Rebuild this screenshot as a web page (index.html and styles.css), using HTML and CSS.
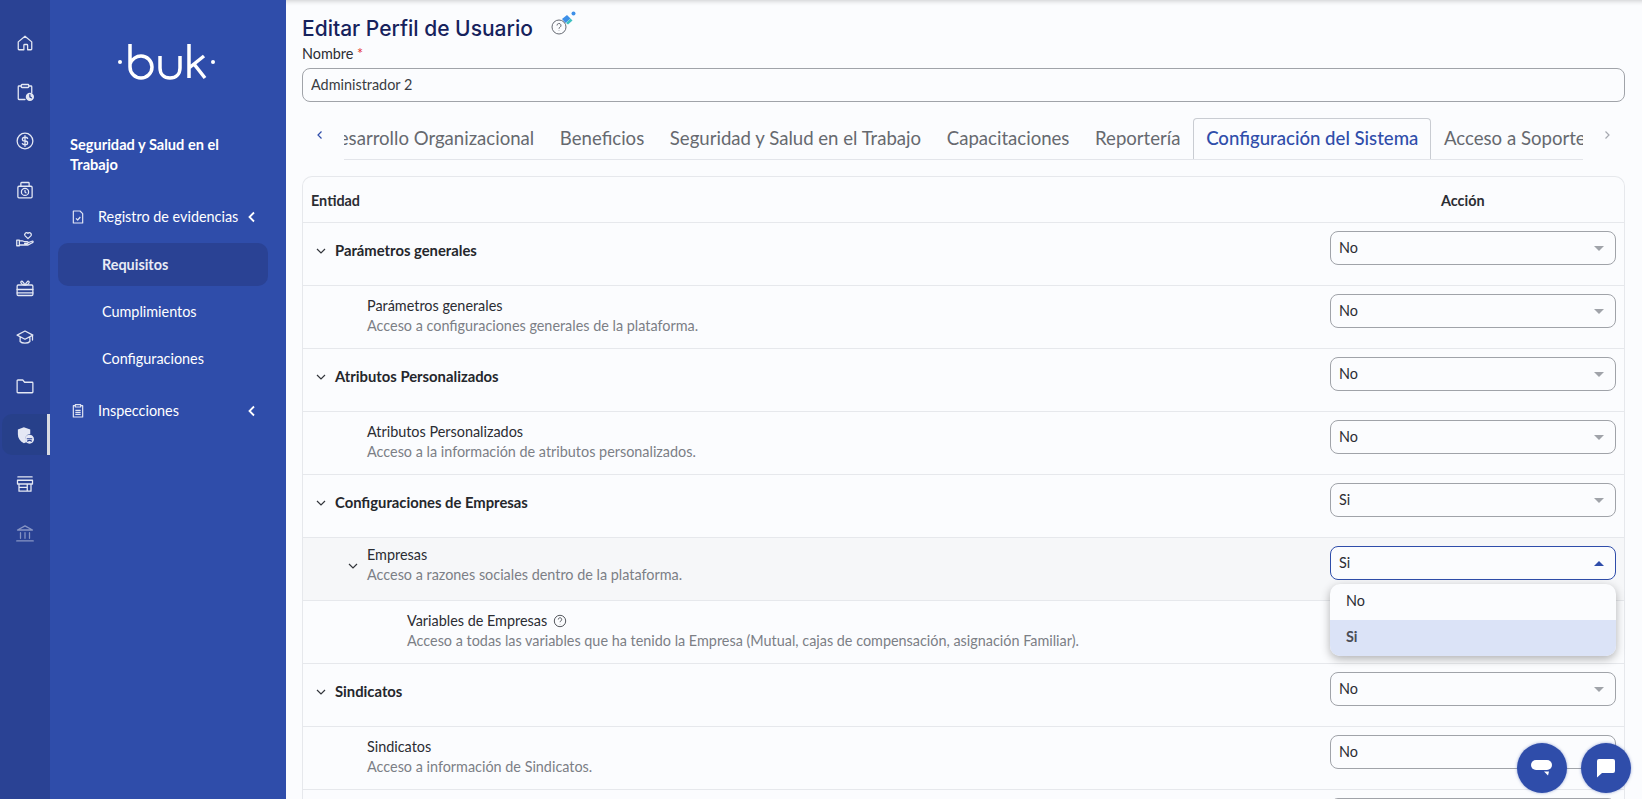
FILE: index.html
```html
<!DOCTYPE html>
<html lang="es">
  <head>
    <meta charset="UTF-8" />
    <meta name="viewport" content="width=device-width, initial-scale=1.0" />
    <title>Editar Perfil de Usuario</title>
    <link rel="stylesheet" href="styles.css">
  </head>
  <body>
    <div class="app">
      <aside class="rail">
        <a class="rail-item"><svg viewBox="0 0 24 24"><path d="M3 10.500l9-7.500 9 7.500v9.500a1 1 0 0 1-1 1h-4.500v-6a1 1 0 0 0-1-1h-3a1 1 0 0 0-1 1v6H4a1 1 0 0 1-1-1z"/></svg></a>
        <a class="rail-item"><svg viewBox="0 0 24 24"><path d="M12 22H4a1 1 0 0 1-1-1V5a1 1 0 0 1 1-1h3M17 4h3a1 1 0 0 1 1 1v8"/><rect x="7" y="2" width="10" height="4" rx="1"/><circle class="solid" cx="18.500" cy="18.500" r="5.500"/><path class="cut" d="M18.500 15.500v3l2 1.300"/></svg></a>
        <a class="rail-item"><svg viewBox="0 0 24 24"><circle cx="12" cy="12" r="10.500"/><path d="M15.500 8.500C15 7.500 14 7 12 7c-2.200 0-3.500 1-3.500 2.500S10 12 12 12s3.500 1 3.500 2.500S14.200 17 12 17c-2 0-3-.5-3.500-1.500M12 5v14"/></svg></a>
        <a class="rail-item"><svg viewBox="0 0 24 24"><rect x="2.500" y="7" width="19" height="15.500" rx="1.500"/><path d="M6.500 7V3a1 1 0 0 1 1-1h9a1 1 0 0 1 1 1v4"/><circle cx="12" cy="14.500" r="4.800"/><path d="M12 12.500v2.300l1.300 1"/></svg></a>
        <a class="rail-item"><svg viewBox="0 0 24 24"><path d="M16 11.500l-3.800-3.700a2.500 2.500 0 0 1 3.800-3.300 2.500 2.500 0 0 1 3.800 3.300z"/><path d="M1 13.500h3.500v7.500H1zM4.500 14.500h4c1 0 2 1 3 1h3.500c1.600 0 1.600 2.500 0 2.500h-3.500M4.500 20h11.500c1 0 4-2 6.500-3.500 1-1-.5-2.200-1.500-1.500L16 17"/></svg></a>
        <a class="rail-item"><svg viewBox="0 0 24 24"><rect x="1.500" y="8" width="21" height="14" rx="1.500"/><path d="M1.500 14h21M1.500 18.500h21M12 8C10 4.500 8 2 6.800 3.200S7.500 8 12 8zM12 8c2-3.500 4-6 5.200-4.800S16.500 8 12 8z"/></svg></a>
        <a class="rail-item"><svg viewBox="0 0 24 24"><path d="M12 4L1.500 9.500 12 15l10.500-5.500zM5.500 12v6c2.500 3 10.500 3 13 0v-6M22 10v6"/></svg></a>
        <a class="rail-item"><svg viewBox="0 0 24 24"><path d="M1.500 5a1 1 0 0 1 1-1h6.500l2.500 3h10a1 1 0 0 1 1 1v12a1 1 0 0 1-1 1h-19a1 1 0 0 1-1-1z"/></svg></a>
        <a class="rail-item active"><svg viewBox="0 0 24 24"><path class="fill" d="M10.500 1.500L19 4.500v6a7 7 0 0 0-5.500 11l-3 1.500C5 20 2.500 16 2.500 11V4.500z"/><circle class="fill" cx="18" cy="17.500" r="6"/><path class="cut" d="M15 17h6M15.500 20c1-1 4-1 5 0"/></svg></a>
        <a class="rail-item"><svg viewBox="0 0 24 24"><path d="M2.500 2.500h19M2 7h20v5H2zM4 12v9.500h16V12M4 16.500h11M15 12.500v9"/></svg></a>
        <a class="rail-item dim"><svg viewBox="0 0 24 24"><path d="M2 8L12 2.500 22 8zM1 22.500h22M6 11.500v7.500M12 11.500v7.500M18 11.500v7.500"/></svg></a>
      </aside>

      <nav class="side">
        <div class="logo">
          <svg viewBox="0 0 98 36" width="98" height="36">
            <circle class="logo-dot" cx="2" cy="18" r="2"/>
            <path d="M12 0v23a11 11 0 1 0 11-11c-4.500 0-9 3-11 8M42 12v12c0 6 4 10 10 10s10-4 10-10V12M71 0v34M71 24l15-12M76 20l11 14"/>
            <circle class="logo-dot" cx="95" cy="18" r="2"/>
          </svg>
        </div>
        <h2 class="side-title">Seguridad y Salud en el Trabajo</h2>
        <a class="side-item first">
          <svg class="side-icon" viewBox="0 0 24 24"><path d="M5 3h10l4 4v14H5zM9 14l2.500 2.500L15.500 12"/></svg>
          <span>Registro de evidencias</span>
          <svg class="side-chev" viewBox="0 0 12 12"><path d="M8 1.500L3.500 6 8 10.500"/></svg>
        </a>
        <a class="side-sub current">Requisitos</a>
        <a class="side-sub">Cumplimientos</a>
        <a class="side-sub">Configuraciones</a>
        <a class="side-item last">
          <svg class="side-icon" viewBox="0 0 24 24"><path d="M8 4H5v17h14V4h-3M8 2.500h8v3.500H8zM8 11h8M8 14h8M8 17h8"/></svg>
          <span>Inspecciones</span>
          <svg class="side-chev" viewBox="0 0 12 12"><path d="M8 1.500L3.500 6 8 10.500"/></svg>
        </a>
      </nav>

      <main class="main">
        <h1 class="page-title">
          Editar Perfil de Usuario
          <svg class="title-help" viewBox="0 0 30 30" width="30" height="30">
            <circle cx="11" cy="17" r="7"/>
            <path d="M9 15.500a2 2 0 1 1 3 1.700c-.7.400-1 .8-1 1.500M11 20.500v.4"/>
            <path class="spark-blue" d="M14 9l5-4 3.500 3.500-5 4.500z"/>
            <path class="spark-teal" d="M18 13l4.500-4.500 2 2-4.500 4z"/>
            <circle class="spark-blue" cx="25.500" cy="3.500" r="2"/>
          </svg>
        </h1>
        <label class="field-label" for="user_name">Nombre <span class="req">*</span></label>
        <input class="text-input" id="user_name" type="text" value="Administrador 2" autocomplete="off" />

        <div class="tabs">
          <svg class="tab-arrow blue" viewBox="0 0 12 12"><path d="M7.500 2.500L4 6l3.500 3.500"/></svg>
          <div class="tab-clip">
            <div class="tab-list">
              <a class="tab">Desarrollo Organizacional</a>
              <a class="tab">Beneficios</a>
              <a class="tab">Seguridad y Salud en el Trabajo</a>
              <a class="tab">Capacitaciones</a>
              <a class="tab">Reportería</a>
              <a class="tab active">Configuración del Sistema</a>
              <a class="tab">Acceso a Soporte</a>
            </div>
          </div>
          <svg class="tab-arrow" viewBox="0 0 12 12"><path d="M4.500 2.500L8 6l-3.500 3.500"/></svg>
        </div>

        <section class="table">
          <div class="table-head">
            <span>Entidad</span>
            <span class="head-action">Acción</span>
          </div>

          <div class="row group">
            <div class="row-text">
              <svg class="chev" viewBox="0 0 12 12"><path d="M2 4l4 4 4-4"/></svg>
              <strong>Parámetros generales</strong>
            </div>
            <div class="select">No<i class="caret"></i></div>
          </div>
          <div class="row sub">
            <div class="row-text">
              <div>
                <div class="row-name">Parámetros generales</div>
                <div class="row-desc">Acceso a configuraciones generales de la plataforma.</div>
              </div>
            </div>
            <div class="select">No<i class="caret"></i></div>
          </div>

          <div class="row group">
            <div class="row-text">
              <svg class="chev" viewBox="0 0 12 12"><path d="M2 4l4 4 4-4"/></svg>
              <strong>Atributos Personalizados</strong>
            </div>
            <div class="select">No<i class="caret"></i></div>
          </div>
          <div class="row sub">
            <div class="row-text">
              <div>
                <div class="row-name">Atributos Personalizados</div>
                <div class="row-desc">Acceso a la información de atributos personalizados.</div>
              </div>
            </div>
            <div class="select">No<i class="caret"></i></div>
          </div>

          <div class="row group">
            <div class="row-text">
              <svg class="chev" viewBox="0 0 12 12"><path d="M2 4l4 4 4-4"/></svg>
              <strong>Configuraciones de Empresas</strong>
            </div>
            <div class="select">Si<i class="caret"></i></div>
          </div>
          <div class="row sub-open">
            <div class="row-text">
              <svg class="chev" viewBox="0 0 12 12"><path d="M2 4l4 4 4-4"/></svg>
              <div>
                <div class="row-name">Empresas</div>
                <div class="row-desc">Acceso a razones sociales dentro de la plataforma.</div>
              </div>
            </div>
            <div class="select open">
              Si<i class="caret"></i>
              <ul class="menu">
                <li>No</li>
                <li class="picked">Si</li>
              </ul>
            </div>
          </div>
          <div class="row subsub">
            <div class="row-text">
              <div>
                <div class="row-name">
                  Variables de Empresas
                  <svg class="help" viewBox="0 0 14 14"><circle cx="7" cy="7" r="5.700"/><path d="M5.300 5.500a1.700 1.700 0 1 1 2.600 1.400c-.6.400-.9.700-.9 1.300M7 10v.3"/></svg>
                </div>
                <div class="row-desc">Acceso a todas las variables que ha tenido la Empresa (Mutual, cajas de compensación, asignación Familiar).</div>
              </div>
            </div>
            <div class="select"></div>
          </div>

          <div class="row group">
            <div class="row-text">
              <svg class="chev" viewBox="0 0 12 12"><path d="M2 4l4 4 4-4"/></svg>
              <strong>Sindicatos</strong>
            </div>
            <div class="select">No<i class="caret"></i></div>
          </div>
          <div class="row sub">
            <div class="row-text">
              <div>
                <div class="row-name">Sindicatos</div>
                <div class="row-desc">Acceso a información de Sindicatos.</div>
              </div>
            </div>
            <div class="select">No<i class="caret"></i></div>
          </div>
          <div class="row group">
            <div class="row-text"></div>
            <div class="select"></div>
          </div>
        </section>
      </main>
    </div>

    <div class="chat-btns">
      <a class="chat-btn"><svg viewBox="0 0 24 24" width="24" height="24"><rect x="1" y="4" width="21" height="10" rx="5"/><path d="M14 15.500h5l-1 4z"/></svg></a>
      <a class="chat-btn"><svg viewBox="0 0 24 24" width="24" height="24"><path d="M5 3h14a2 2 0 0 1 2 2v10a2 2 0 0 1-2 2H8l-5 4.500V5a2 2 0 0 1 2-2z"/></svg></a>
    </div>
  </body>
</html>
```

FILE: styles.css
```css
* {
  box-sizing: border-box;
}
html,
body {
  margin: 0;
  height: 100%;
  overflow: hidden;
}
body {
  font-family: "Lato", "Open Sans", sans-serif;
  font-size: 14.4px;
  color: #2b2d33;
  background-color: #fbfcfe;
}
.app {
  display: flex;
  height: 799px;
}

/* icon rail */
.rail {
  width: 50px;
  flex-shrink: 0;
  padding: 22px 0 0 2px;
  background-color: #2a4294;
}
.rail-item {
  display: flex;
  align-items: center;
  justify-content: center;
  height: 41px;
  margin-bottom: 8px;
  padding-right: 2px;
  border-radius: 10px 0 0 10px;
}
.rail-item svg {
  width: 18px;
  height: 18px;
  fill: none;
  stroke: #e4e8f4;
  stroke-width: 1.700;
  stroke-linejoin: round;
  stroke-linecap: round;
}
.rail-item .solid,
.rail-item .fill {
  fill: #e4e8f4;
  stroke: none;
}
.rail-item .cut {
  stroke: #2a4294;
  stroke-width: 1.600;
}
.rail-item.dim svg {
  opacity: 0.5;
}
.rail-item.active {
  background-color: #27408a;
  border-right: 3px solid #d8dbe2;
  padding-right: 0;
}

/* section menu */
.side {
  width: 236px;
  flex-shrink: 0;
  padding: 0 18px 0 8px;
  color: #fff;
  background-color: #2f4daa;
}
.logo {
  display: flex;
  justify-content: center;
  height: 135px;
  padding: 44px 0 0 8px;
}
.logo svg {
  fill: none;
  stroke: #fff;
  stroke-width: 3.500;
}
.logo .logo-dot {
  fill: #fff;
  stroke: none;
}
.side-title {
  width: 170px;
  margin: 0 0 20px 12px;
  font-size: 14.6px;
  font-weight: 700;
  line-height: 20px;
}
.side-item {
  display: flex;
  align-items: center;
  height: 43px;
  margin-bottom: 4px;
  padding-left: 12px;
}
.side-item span {
  flex: 1;
  margin-left: 12px;
}
.side-item.first {
  margin-bottom: 5px;
}
.side-item.last {
  margin-top: 9px;
}
.side-icon {
  width: 16px;
  height: 16px;
  fill: none;
  stroke: #dfe4f3;
  stroke-width: 1.800;
  stroke-linejoin: round;
}
.side-chev {
  width: 12px;
  height: 12px;
  margin-right: 10px;
  fill: none;
  stroke: #fff;
  stroke-width: 1.800;
}
.side-sub {
  display: flex;
  align-items: center;
  height: 43px;
  margin-bottom: 4px;
  padding-left: 44px;
  border-radius: 10px;
}
.side-sub.current {
  background-color: #2a4294;
  font-weight: 700;
  color: #e8ebf5;
}

/* content */
.main {
  flex: 1;
  min-width: 0;
  overflow: hidden;
  padding: 14px 17px 0 16px;
  box-shadow: inset 0 6px 5px -5px rgba(0, 0, 0, 0.2);
}
.page-title {
  display: flex;
  align-items: center;
  height: 28px;
  margin: 0 0 4px;
  font-family: "Inter", sans-serif;
  font-size: 21px;
  font-weight: 500;
  color: #16225c;
}
.title-help {
  margin: -7px 0 0 15px;
  fill: none;
  stroke: #666a73;
  stroke-width: 1;
}
.title-help .spark-blue {
  fill: #3d8fe8;
  stroke: none;
}
.title-help .spark-teal {
  fill: #3cc0c0;
  stroke: none;
}
.field-label {
  display: block;
  height: 22px;
  line-height: 16px;
}
.req {
  color: #e3342f;
}
.text-input {
  display: block;
  width: 100%;
  height: 34px;
  padding: 0 8px 2px;
  font: inherit;
  color: #3a3c42;
  background-color: transparent;
  border: 1px solid #a0a3a9;
  border-radius: 8px;
  outline: none;
}

.tabs {
  display: flex;
  align-items: flex-start;
  height: 58px;
  margin-top: 16px;
}
.tab-arrow {
  width: 12px;
  height: 12px;
  margin-top: 11px;
  flex-shrink: 0;
  fill: none;
  stroke: #a6a9b0;
  stroke-width: 1.200;
}
.tab-arrow.blue {
  margin-left: 12px;
  margin-right: 18px;
  stroke: #2f4daa;
}
.tab-arrow:last-child {
  margin-left: 18px;
}
.tab-clip {
  width: 1239px;
  height: 42px;
  overflow: hidden;
  border-bottom: 1px solid #e3e5ea;
}
.tab-list {
  display: flex;
  margin-left: -32px;
  white-space: nowrap;
}
.tab {
  flex-shrink: 0;
  height: 42px;
  padding: 0 11.800px;
  border: 1px solid transparent;
  border-bottom: 0;
  font-size: 18.600px;
  line-height: 39px;
  color: #66696f;
}
.tab.active {
  color: #2f4daa;
  font-weight: 500;
  background-color: #fbfcfe;
  border-color: #c9ccd2;
  border-radius: 4px 4px 0 0;
}

.table {
  border: 1px solid #e6e8ec;
  border-bottom: 0;
  border-radius: 10px 10px 0 0;
}
.table-head {
  display: flex;
  align-items: center;
  justify-content: space-between;
  height: 46px;
  padding: 2px 0 0 8px;
  font-weight: 700;
  border-bottom: 1px solid #e6e8ec;
}
.head-action {
  width: 294px;
  padding-left: 111px;
}
.row {
  display: flex;
  align-items: flex-start;
  justify-content: space-between;
  height: 63px;
  padding: 8px 8px 0 0;
  border-bottom: 1px solid #e6e8ec;
}
.row-text {
  display: flex;
  align-items: flex-start;
  gap: 8px;
  margin-top: 2px;
  line-height: 20px;
}
.row.group .row-text {
  margin-top: 9px;
  padding-left: 12px;
}
.row.sub .row-text {
  padding-left: 64px;
}
.row.sub-open {
  background-color: #f6f7f9;
}
.row.sub-open .row-text {
  margin-top: -1px;
  padding-left: 44px;
}
.row.sub-open .chev {
  margin-top: 15px;
}
.row.subsub .row-text {
  padding-left: 104px;
}
.chev {
  width: 12px;
  height: 12px;
  margin-top: 5px;
  flex-shrink: 0;
  fill: none;
  stroke: #33363c;
  stroke-width: 1.200;
}
.row-text strong {
  font-size: 14.800px;
  font-weight: 700;
  color: #25272c;
}
.row-name {
  display: flex;
  align-items: center;
  gap: 6px;
  color: #2b2d33;
}
.row-desc {
  color: #7c7f86;
}
.help {
  width: 14px;
  height: 14px;
  fill: none;
  stroke: #55585e;
  stroke-width: 1;
}
.select {
  position: relative;
  width: 286px;
  height: 34px;
  padding-left: 8px;
  line-height: 31px;
  background-color: #fbfcfe;
  border: 1px solid #a0a3a9;
  border-radius: 8px;
}
.caret {
  position: absolute;
  top: 14px;
  right: 11px;
  width: 0;
  height: 0;
  border-left: 5.500px solid transparent;
  border-right: 5.500px solid transparent;
  border-top: 5.500px solid #a0a3a9;
}
.select.open {
  border-color: #2f4daa;
}
.select.open .caret {
  border-top: 0;
  border-bottom: 5.500px solid #2f4daa;
}
.menu {
  position: absolute;
  z-index: 5;
  top: 37px;
  left: -1px;
  right: -1px;
  margin: 0;
  padding: 0;
  overflow: hidden;
  list-style: none;
  background-color: #fbfcfe;
  border-radius: 10px;
  box-shadow: 0 3px 10px rgba(0, 0, 0, 0.3);
}
.menu li {
  height: 36px;
  padding-left: 16px;
  line-height: 34px;
}
.menu .picked {
  font-weight: 700;
  color: #4a4d55;
  background-color: #dbe3f7;
}

/* floating buttons */
.chat-btns {
  position: fixed;
  right: 11px;
  bottom: 6px;
  display: flex;
  gap: 14px;
}
.chat-btn {
  display: flex;
  align-items: center;
  justify-content: center;
  width: 50px;
  height: 50px;
  border-radius: 50%;
  background-color: #2f4daa;
  box-shadow: 0 0 3px rgba(47, 77, 170, 0.5);
}
.chat-btn svg {
  fill: #fff;
}
```
